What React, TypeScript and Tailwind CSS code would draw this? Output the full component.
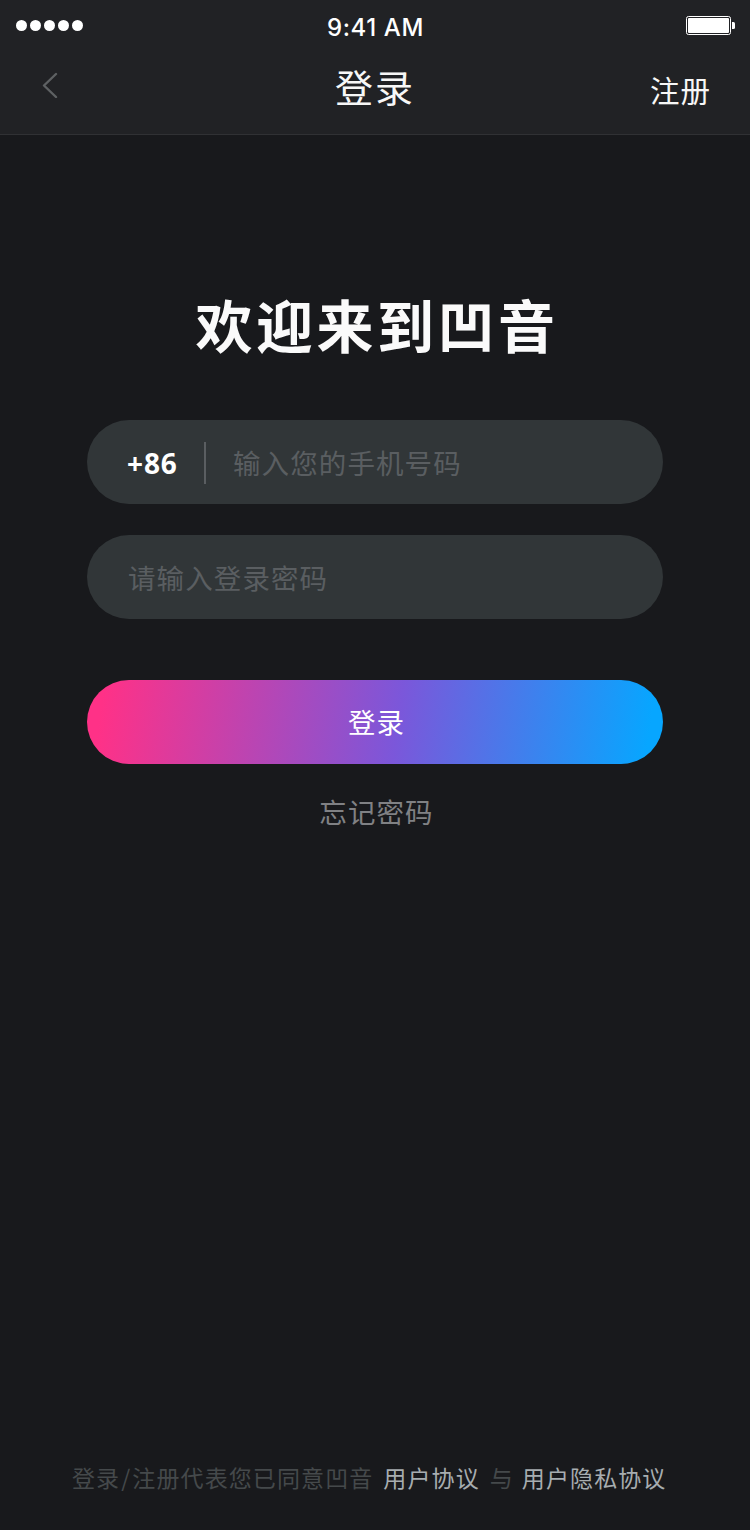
import { useState } from 'react';

function StatusBar() {
  return (
    <div className="grid grid-cols-3 items-start h-[52px] px-[15px]">
      <div className="flex gap-[3px] pt-5 pl-px">
        {[0, 1, 2, 3, 4].map((dot) => (
          <span key={dot} className="w-[11px] h-[11px] rounded-full bg-white" />
        ))}
      </div>
      <div className="pt-[13px] pl-px text-center text-white text-2xl leading-[30px] font-medium tracking-[0.6px] whitespace-nowrap font-['Inter',sans-serif]">
        9:41 AM
      </div>
      <div className="flex justify-end items-center pt-4">
        <svg width="49" height="19" viewBox="0 0 49 19" fill="none">
          <rect x="0.5" y="0.5" width="44" height="18" rx="2" stroke="#fff" />
          <rect x="2" y="2" width="41" height="15" rx="1" fill="#fff" />
          <path d="M46 6h1.5A1.5 1.5 0 0 1 49 7.5v4a1.5 1.5 0 0 1-1.5 1.5H46z" fill="#fff" />
        </svg>
      </div>
    </div>
  );
}

export default function App() {
  const [phone, setPhone] = useState('');
  const [password, setPassword] = useState('');

  return (
    <div className="flex flex-col w-[750px] h-[1530px] bg-[#18191c] font-['Noto_Sans_CJK_SC',sans-serif]">
      <header className="h-[135px] bg-[#212225] border-b border-[#303134]">
        <StatusBar />
        <div className="grid grid-cols-3 items-start pl-[39px] pr-[39px]">
          <button type="button" aria-label="返回" className="pt-5 pl-[3px]">
            <svg width="17" height="26" viewBox="0 0 17 26" fill="none">
              <path
                d="M14 2L2 13.5L14 25"
                stroke="#5e6163"
                strokeWidth="2.4"
                strokeLinecap="round"
                strokeLinejoin="round"
              />
            </svg>
          </button>
          <h1 className="pt-2 text-center text-[#f7f7f7] text-[38px] leading-[52px] tracking-[2px]">登录</h1>
          <button type="button" className="pt-4 text-right text-[#f7f7f7] text-[29.5px] leading-[42px] tracking-[1px]">
            注册
          </button>
        </div>
      </header>

      <main className="flex flex-col items-center px-[87px] pt-[148px]">
        <h2 className="text-[#fafafa] text-[57px] leading-[80px] font-bold tracking-[3.5px] pl-1">欢迎来到凹音</h2>

        {/* Formulario */}
        <form className="w-full mt-[57px]" onSubmit={(e) => e.preventDefault()}>
          <div className="flex items-center h-[84px] px-10 rounded-full bg-[#313638]">
            <span className="w-[51px] pt-0.5 text-white text-[28px] leading-[40px] font-bold tracking-[0.9px] font-['Noto_Sans',sans-serif]">
              +86
            </span>
            <span className="w-0.5 h-[42px] mt-0.5 ml-[26px] mr-[27px] bg-[#5a5e61]" />
            <input
              type="tel"
              value={phone}
              onChange={(e) => setPhone(e.target.value)}
              placeholder="输入您的手机号码"
              className="flex-1 min-w-0 bg-transparent outline-none text-white text-[27.5px] leading-[40px] tracking-[1.1px] placeholder:text-[#5a5e61]"
            />
          </div>

          <div className="flex items-center h-[84px] mt-[31px] px-[41px] rounded-full bg-[#313638]">
            <input
              type="password"
              value={password}
              onChange={(e) => setPassword(e.target.value)}
              placeholder="请输入登录密码"
              className="flex-1 min-w-0 bg-transparent outline-none text-white text-[27.5px] leading-[40px] tracking-[1.1px] placeholder:text-[#5a5e61]"
            />
          </div>

          <button
            type="submit"
            className="w-full h-[84px] mt-[61px] pl-[3px] pb-px rounded-full bg-[linear-gradient(98deg,#ff3187_3%,#7b57da_54%,#07a6ff_97%)] text-white text-[27.5px] tracking-[1.1px]"
          >
            登录
          </button>
        </form>

        <a href="#" className="mt-[27px] pl-[3px] text-[#808184] text-[27.5px] leading-[40px] tracking-[1.1px]">
          忘记密码
        </a>
      </main>

      <footer className="flex mt-auto pl-[72px] pb-9 text-[#45494b] text-[23px] leading-[34px] tracking-[1.1px] whitespace-nowrap">
        <span>
          登录<span className="px-px">/</span>注册代表您已同意凹音
        </span>
        <a href="#" className="ml-2.5 text-[#a7adb0]">用户协议</a>
        <span className="ml-2.5">与</span>
        <a href="#" className="ml-2 text-[#a7adb0]">用户隐私协议</a>
      </footer>
    </div>
  );
}
